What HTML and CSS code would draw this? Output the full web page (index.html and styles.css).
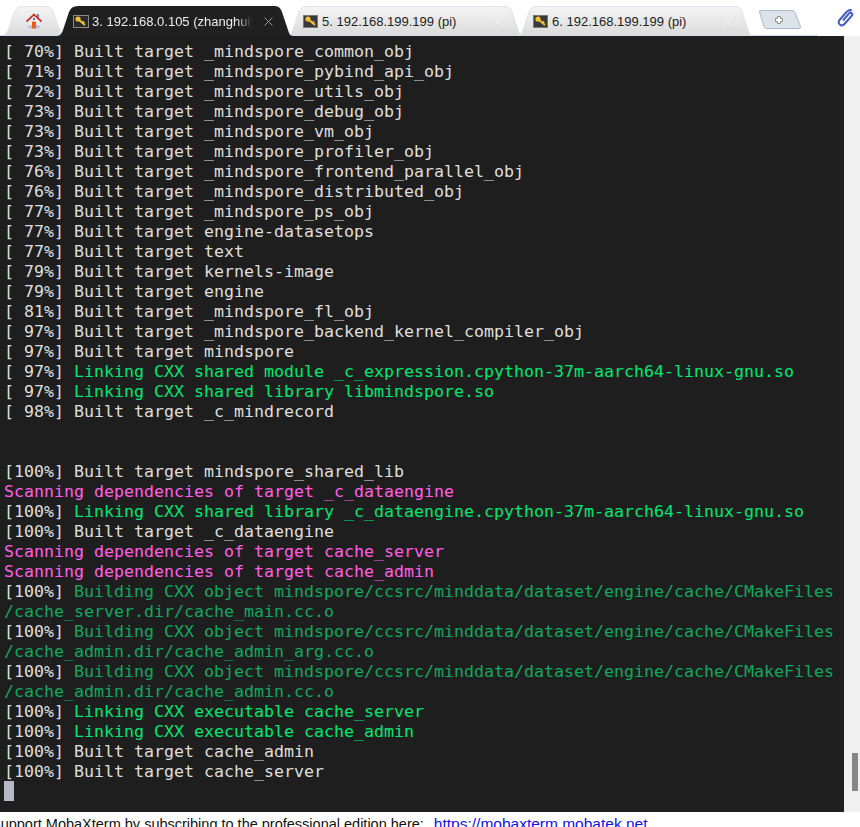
FILE: index.html
```html
<!DOCTYPE html>
<html lang="en">

<head>
  <meta charset="UTF-8">
  <title>MobaXterm</title>
  <link rel="stylesheet" href="styles.css">
</head>

<body>
  <header class="tabbar">
    <div class="tab tab-home">
      <svg class="tab-shape" width="62" height="30" viewBox="0 0 62 30">
        <defs>
          <linearGradient id="tabfill" x1="0" y1="0" x2="0" y2="1">
            <stop offset="0" stop-color="#f5f5f5" />
            <stop offset="1" stop-color="#dadada" />
          </linearGradient>
        </defs>
        <path d="M0 30 C5 30 7 27 9 22 L14 7 Q16 0.500 23 0.500 L45 0.500 Q51 0.500 53 6 L62 30 Z" fill="url(#tabfill)" stroke="#dbe3ec" />
      </svg>
      <svg class="home-icon" width="16" height="16" viewBox="0 0 16 16">
        <rect x="11" y="1" width="2" height="4" fill="#6f86b8" />
        <path d="M2.500 8 L8 3.500 L13.500 8 V15 H2.500 Z" fill="#f2f0f0" />
        <rect x="2.500" y="12" width="11" height="3.500" fill="#b9c4e8" />
        <rect x="6" y="8.500" width="4" height="7" fill="#ea5a1e" />
        <rect x="7" y="5" width="2" height="2" fill="#3f78c0" />
        <path d="M0.500 8.500 L8 1.500 L15.500 8.500" fill="none" stroke="#c9342c" stroke-width="1.800" />
      </svg>
    </div>

    <div class="tab tab-active">
      <svg class="tab-shape" width="236" height="30" viewBox="0 0 236 30">
        <path d="M0 30 C3 30 5 27 6 24 L12 6 Q14 0 21 0 L218 0 Q223 0 225 6 L231 24 C232 27 233 30 236 30 Z" fill="#202020" />
      </svg>
      <span class="key-icon key-dark"><svg width="12" height="11" viewBox="0 0 12 11"><circle cx="3" cy="3" r="2.600" fill="#f2c230" /><path d="M4 4 L10 9 M7.500 7 L9 5.500" stroke="#f2c230" stroke-width="2" fill="none" /></svg></span>
      <span class="tab-label label-active">3. 192.168.0.105 (zhanghui)</span>
      <svg class="tab-close" width="9" height="9" viewBox="0 0 9 9"><path d="M0.500 0.500 L8.500 8.500 M8.500 0.500 L0.500 8.500" stroke="#9a9a9a" stroke-width="1" /></svg>
    </div>

    <div class="tab tab-idle">
      <svg class="tab-shape" width="236" height="30" viewBox="0 0 236 30">
        <path d="M0 30 C3 30 5 27 6 24 L12 6 Q14 0.500 21 0.500 L218 0.500 Q223 0.500 225 6 L231 24 C232 27 233 30 236 30 Z" fill="url(#tabfill)" stroke="#dbe3ec" />
      </svg>
      <span class="key-icon"><svg width="12" height="11" viewBox="0 0 12 11"><circle cx="3" cy="3" r="2.600" fill="#f2c230" /><path d="M4 4 L10 9 M7.500 7 L9 5.500" stroke="#f2c230" stroke-width="2" fill="none" /></svg></span>
      <span class="tab-label">5. 192.168.199.199 (pi)</span>
      <svg class="tab-close" width="9" height="9" viewBox="0 0 9 9"><path d="M0.500 0.500 L8.500 8.500 M8.500 0.500 L0.500 8.500" stroke="#f4f4f4" stroke-width="1" /></svg>
    </div>

    <div class="tab tab-idle">
      <svg class="tab-shape" width="236" height="30" viewBox="0 0 236 30">
        <path d="M0 30 C3 30 5 27 6 24 L12 6 Q14 0.500 21 0.500 L218 0.500 Q223 0.500 225 6 L231 24 C232 27 233 30 236 30 Z" fill="url(#tabfill)" stroke="#dbe3ec" />
      </svg>
      <span class="key-icon"><svg width="12" height="11" viewBox="0 0 12 11"><circle cx="3" cy="3" r="2.600" fill="#f2c230" /><path d="M4 4 L10 9 M7.500 7 L9 5.500" stroke="#f2c230" stroke-width="2" fill="none" /></svg></span>
      <span class="tab-label">6. 192.168.199.199 (pi)</span>
      <svg class="tab-close" width="9" height="9" viewBox="0 0 9 9"><path d="M0.500 0.500 L8.500 8.500 M8.500 0.500 L0.500 8.500" stroke="#f4f4f4" stroke-width="1" /></svg>
    </div>

    <svg class="new-tab" width="42" height="19" viewBox="0 0 42 19">
      <path d="M0.500 2 Q0.500 0.500 2 0.500 L33 0.500 Q35 0.500 36 2.500 L41.500 16.500 Q42 18.500 40 18.500 L8 18.500 Q6 18.500 5 16.500 Z" fill="#dce2ea" stroke="#a9b8ca" />
      <path d="M18.500 6.500 h3 v2 h2 v3 h-2 v2 h-3 v-2 h-2 v-3 h2 Z" fill="#fff" stroke="#8f8f8f" />
    </svg>

    <svg class="clip-icon" width="18" height="18" viewBox="0 0 18 18">
      <path d="M6 11.500 L12 4.500 Q13.500 3 14.800 4.200 Q16 5.500 14.500 7 L7.500 15 Q5 17.500 2.800 15.500 Q0.500 13.300 3 10.500 L9.500 3 Q12 0.500 14.800 1.200" fill="none" stroke="#4a5cc8" stroke-width="2" />
    </svg>
  </header>

  <div class="session">
    <main class="terminal">
<pre class="output">[ 70%] Built target _mindspore_common_obj
[ 71%] Built target _mindspore_pybind_api_obj
[ 72%] Built target _mindspore_utils_obj
[ 73%] Built target _mindspore_debug_obj
[ 73%] Built target _mindspore_vm_obj
[ 73%] Built target _mindspore_profiler_obj
[ 76%] Built target _mindspore_frontend_parallel_obj
[ 76%] Built target _mindspore_distributed_obj
[ 77%] Built target _mindspore_ps_obj
[ 77%] Built target engine-datasetops
[ 77%] Built target text
[ 79%] Built target kernels-image
[ 79%] Built target engine
[ 81%] Built target _mindspore_fl_obj
[ 97%] Built target _mindspore_backend_kernel_compiler_obj
[ 97%] Built target mindspore
[ 97%] <span class="green">Linking CXX shared module _c_expression.cpython-37m-aarch64-linux-gnu.so</span>
[ 97%] <span class="green">Linking CXX shared library libmindspore.so</span>
[ 98%] Built target _c_mindrecord


[100%] Built target mindspore_shared_lib
<span class="magenta">Scanning dependencies of target _c_dataengine</span>
[100%] <span class="green">Linking CXX shared library _c_dataengine.cpython-37m-aarch64-linux-gnu.so</span>
[100%] Built target _c_dataengine
<span class="magenta">Scanning dependencies of target cache_server</span>
<span class="magenta">Scanning dependencies of target cache_admin</span>
[100%] <span class="dim-green">Building CXX object mindspore/ccsrc/minddata/dataset/engine/cache/CMakeFiles</span>
<span class="dim-green">/cache_server.dir/cache_main.cc.o</span>
[100%] <span class="dim-green">Building CXX object mindspore/ccsrc/minddata/dataset/engine/cache/CMakeFiles</span>
<span class="dim-green">/cache_admin.dir/cache_admin_arg.cc.o</span>
[100%] <span class="dim-green">Building CXX object mindspore/ccsrc/minddata/dataset/engine/cache/CMakeFiles</span>
<span class="dim-green">/cache_admin.dir/cache_admin.cc.o</span>
[100%] <span class="green">Linking CXX executable cache_server</span>
[100%] <span class="green">Linking CXX executable cache_admin</span>
[100%] Built target cache_admin
[100%] Built target cache_server
<span class="cursor"> </span></pre>
    </main>
    <aside class="scrollbar">
      <div class="scroll-thumb"></div>
    </aside>
  </div>

  <footer class="status">
    <span class="status-text">Support MobaXterm by subscribing to the professional edition here:</span>
    <a class="status-link" href="#">https://mobaxterm.mobatek.net</a>
  </footer>
</body>

</html>
```

FILE: styles.css
```css
html,
body {
  margin: 0;
  height: 827px;
  overflow: hidden;
  background: #fff;
}

body {
  display: flex;
  flex-direction: column;
  font-family: "Liberation Sans", Arial, sans-serif;
}

/* tab strip */
.tabbar {
  position: relative;
  display: flex;
  align-items: flex-end;
  flex: 0 0 36px;
}

.tabbar::after {
  content: "";
  position: absolute;
  left: 0;
  right: 42px;
  bottom: 0;
  height: 1px;
  background: #d5dbe3;
}

.tab {
  position: relative;
  display: flex;
  align-items: center;
  flex: none;
  width: 236px;
  height: 30px;
  margin-inline-end: -6px;
  padding-inline-start: 16px;
  box-sizing: border-box;
  font-size: 13px;
  color: #1c1c1c;
}

.tab-shape {
  position: absolute;
  left: 0;
  top: 0;
}

.tab-home {
  width: 62px;
  margin-inline-end: -5px;
  padding-inline-start: 26px;
}

.tab-active {
  z-index: 2;
}

.tab-idle {
  z-index: 1;
}

.home-icon,
.key-icon,
.tab-label,
.tab-close {
  position: relative;
}

.key-icon {
  display: flex;
  align-items: center;
  justify-content: center;
  flex: none;
  width: 15px;
  height: 13px;
  margin-inline-end: 4px;
  background: #3a3a3a;
  border: 1px solid #777;
  box-sizing: border-box;
}

.key-dark {
  width: 16px;
  margin-inline-end: 3px;
  background: #2a2a2a;
  border-color: #8a8a8a;
}

.key-icon svg {
  flex: none;
}

.tab-label {
  flex: none;
  width: 172px;
  white-space: nowrap;
  overflow: hidden;
}

.label-active {
  width: 161px;
  color: #ececec;
  mask-image: linear-gradient(to right, #000 90%, transparent);
}

.tab-close {
  flex: none;
  margin-inline-start: 11px;
}

.tab-idle .tab-close {
  margin-inline-start: 0;
}

.new-tab {
  flex: none;
  margin-inline-start: 12px;
  margin-block-end: 7px;
}

.clip-icon {
  position: absolute;
  right: 5px;
  top: 9px;
}

/* terminal */
.session {
  display: flex;
  flex: 0 0 776px;
}

.terminal {
  flex: 1;
  background: #1e1e1e;
  padding: 6px 0 0 4px;
  overflow: hidden;
}

.output {
  margin: 0;
  font-family: "DejaVu Sans Mono", monospace;
  font-size: 16.63px;
  line-height: 20px;
  color: #dedede;
}

.green {
  color: #00e676;
}

.dim-green {
  color: #10a862;
}

.magenta {
  color: #ff5fe8;
}

.cursor {
  display: inline-block;
  width: 10px;
  height: 20px;
  margin-block-start: -1px;
  vertical-align: top;
  background: #b8b8c4;
}

.scrollbar {
  flex: 0 0 16px;
  background: #f0f0f0;
  box-sizing: border-box;
  padding: 717px 2px 0 8px;
}

.scroll-thumb {
  height: 38px;
  background: #868686;
}

/* status line, cut off by the window */
.status {
  flex: 1;
  margin-inline-start: -9px;
  font-size: 14.5px;
  line-height: 24px;
  white-space: nowrap;
  color: #111;
  overflow: hidden;
}

.status-link {
  margin-inline-start: 6px;
  font-size: 15.5px;
  color: #1010f0;
  text-decoration: underline;
}
```
